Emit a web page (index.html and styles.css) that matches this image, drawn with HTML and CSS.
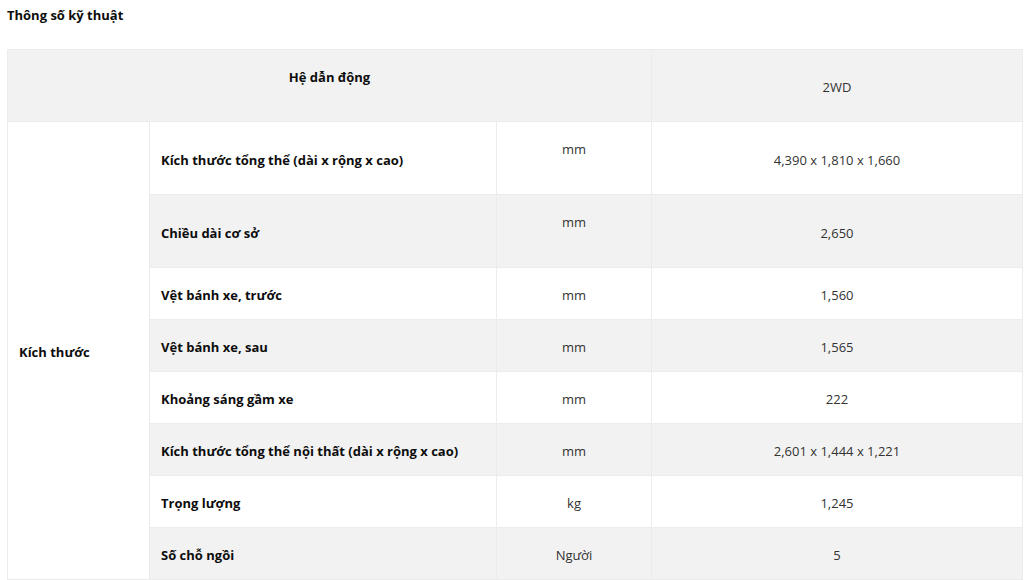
FILE: index.html
```html
<!DOCTYPE html>
<html lang="vi">
<head>
<meta charset="utf-8">
<title>Thông số kỹ thuật</title>
<link rel="stylesheet" href="styles.css">
</head>
<body>
<div class="page">
  <h2 class="title">Thông số kỹ thuật</h2>
  <table class="spec">
    <colgroup>
      <col class="c1"><col class="c2"><col class="c3"><col class="c4">
    </colgroup>
    <thead>
      <tr class="head">
        <th colspan="3" class="top">Hệ dẫn động</th>
        <td class="val">2WD</td>
      </tr>
    </thead>
    <tbody>
      <tr class="tall">
        <th rowspan="8" class="group">Kích thước</th>
        <th class="label">Kích thước tổng thể (dài x rộng x cao)</th>
        <td class="unit top">mm</td>
        <td class="val">4,390 x 1,810 x 1,660</td>
      </tr>
      <tr class="tall alt">
        <th class="label">Chiều dài cơ sở</th>
        <td class="unit top">mm</td>
        <td class="val">2,650</td>
      </tr>
      <tr>
        <th class="label">Vệt bánh xe, trước</th>
        <td class="unit">mm</td>
        <td class="val">1,560</td>
      </tr>
      <tr class="alt">
        <th class="label">Vệt bánh xe, sau</th>
        <td class="unit">mm</td>
        <td class="val">1,565</td>
      </tr>
      <tr>
        <th class="label">Khoảng sáng gầm xe</th>
        <td class="unit">mm</td>
        <td class="val">222</td>
      </tr>
      <tr class="alt">
        <th class="label">Kích thước tổng thể nội thất (dài x rộng x cao)</th>
        <td class="unit">mm</td>
        <td class="val">2,601 x 1,444 x 1,221</td>
      </tr>
      <tr>
        <th class="label">Trọng lượng</th>
        <td class="unit">kg</td>
        <td class="val">1,245</td>
      </tr>
      <tr class="alt">
        <th class="label">Số chỗ ngồi</th>
        <td class="unit">Người</td>
        <td class="val">5</td>
      </tr>
    </tbody>
  </table>
</div>
</body>
</html>
```
FILE: styles.css
```css
html, body {
  margin: 0;
  padding: 0;
  background: #fff;
}
body {
  font-family: "Open Sans", "Noto Sans", Arial, sans-serif;
  color: #111;
}
.page {
  padding: 5px 2px 0 7px;
}
.title {
  margin: 0 0 23px;
  font-size: 13px;
  line-height: 21px;
  font-weight: 700;
  color: #0d0d0d;
}
.spec {
  width: 1015px;
  border-collapse: collapse;
  table-layout: fixed;
  font-size: 13px;
  line-height: 21px;
}
.c1 { width: 142px; }
.c2 { width: 347px; }
.c3 { width: 155px; }
.c4 { width: 371px; }
.spec th, .spec td {
  border: 1px solid #ececec;
  padding: 17px 11px 13px;
  height: 21px;
  vertical-align: middle;
}
.spec th {
  font-weight: 700;
  color: #0d0d0d;
  text-align: left;
}
.head th, .head td {
  background: #f2f2f2;
  height: 41px;
}
.head .top {
  text-align: center;
  vertical-align: top;
}
.tall th.label, .tall td {
  height: 42px;
}
.spec .group {
  background: #fff;
}
.spec .alt th.label, .spec .alt td {
  background: #f2f2f2;
}
.spec .top {
  vertical-align: top;
}
.unit, .val {
  text-align: center;
  color: #333;
  font-weight: 400;
}
```
